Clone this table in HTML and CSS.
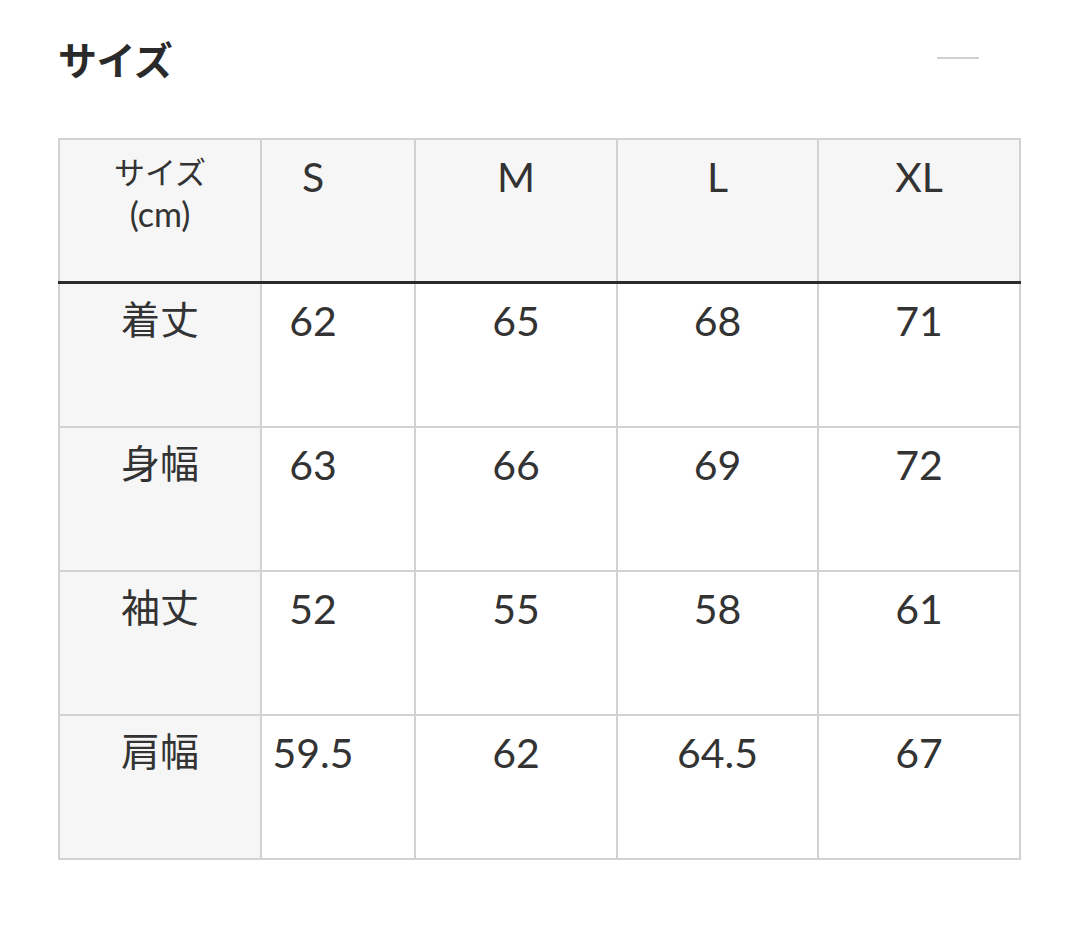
FILE: index.html
```html
<!DOCTYPE html>
<html lang="ja">
<head>
<meta charset="utf-8">
<title>サイズ</title>
<link rel="stylesheet" href="styles.css">
</head>
<body>
<section class="size-section">
  <div class="section-head">
    <h2 class="section-title">サイズ</h2>
    <span class="collapse-dash" aria-hidden="true"></span>
  </div>
  <table class="size-table">
    <colgroup>
      <col class="c1"><col class="c2"><col class="c3"><col class="c4"><col class="c5">
    </colgroup>
    <thead>
      <tr>
        <th class="label head-label"><span class="hl-jp">サイズ</span><span class="hl-unit">(cm)</span></th>
        <th class="first">S</th>
        <th>M</th>
        <th>L</th>
        <th>XL</th>
      </tr>
    </thead>
    <tbody>
      <tr><th class="label">着丈</th><td class="first">62</td><td>65</td><td>68</td><td>71</td></tr>
      <tr><th class="label">身幅</th><td class="first">63</td><td>66</td><td>69</td><td>72</td></tr>
      <tr><th class="label">袖丈</th><td class="first">52</td><td>55</td><td>58</td><td>61</td></tr>
      <tr><th class="label">肩幅</th><td class="first">59.5</td><td>62</td><td>64.5</td><td>67</td></tr>
    </tbody>
  </table>
</section>
</body>
</html>
```
FILE: styles.css
```css
html, body {
  margin: 0;
  padding: 0;
  background: #ffffff;
}

body {
  color: #333333;
  font-family: "Lato", "Noto Sans CJK JP", sans-serif;
}

.size-section {
  padding: 38px 61px 0 58px;
  width: 961px;
}

.section-head {
  display: flex;
  justify-content: space-between;
  align-items: center;
  height: 40px;
}

.section-title {
  margin: 0;
  font-family: "Noto Sans CJK JP", sans-serif;
  font-size: 39px;
  line-height: 40px;
  font-weight: 700;
  color: #2a2a2a;
  letter-spacing: -0.5px;
}

.collapse-dash {
  display: block;
  width: 42px;
  height: 2px;
  background: #cfcfcf;
  margin-right: 40px;
}

.size-table {
  margin-top: 60px;
  border-collapse: collapse;
  table-layout: fixed;
  width: 961px;
  border: 2px solid #d2d2d2;
}

.c1 { width: 202px; }
.c2 { width: 154px; }
.c3 { width: 202px; }
.c4 { width: 201px; }
.c5 { width: 202px; }

.size-table th,
.size-table td {
  border: 2px solid #d2d2d2;
  vertical-align: top;
  text-align: center;
  font-weight: 400;
  padding: 12px 0 0 0;
  font-size: 41px;
  line-height: 49px;
  color: #333333;
}

.size-table thead th {
  background: #f6f6f6;
  height: 129px;
  border-bottom: 3px solid #2b2b2b;
}

.size-table tbody tr {
  height: 144px;
}

.size-table tbody td {
  height: 130px;
}

.size-table .label {
  background: #f6f6f6;
  font-family: "Noto Sans CJK JP", sans-serif;
  font-size: 39px;
  line-height: 46px;
  padding-top: 10px;
}

.size-table .head-label {
  padding-top: 8px;
}

.hl-jp {
  display: block;
  font-family: "Noto Sans CJK JP", sans-serif;
  font-size: 31px;
  line-height: 45px;
}

.hl-unit {
  display: block;
  font-family: "Lato", sans-serif;
  font-size: 34px;
  line-height: 41px;
}

.size-table .first {
  padding-right: 50px;
}
```
